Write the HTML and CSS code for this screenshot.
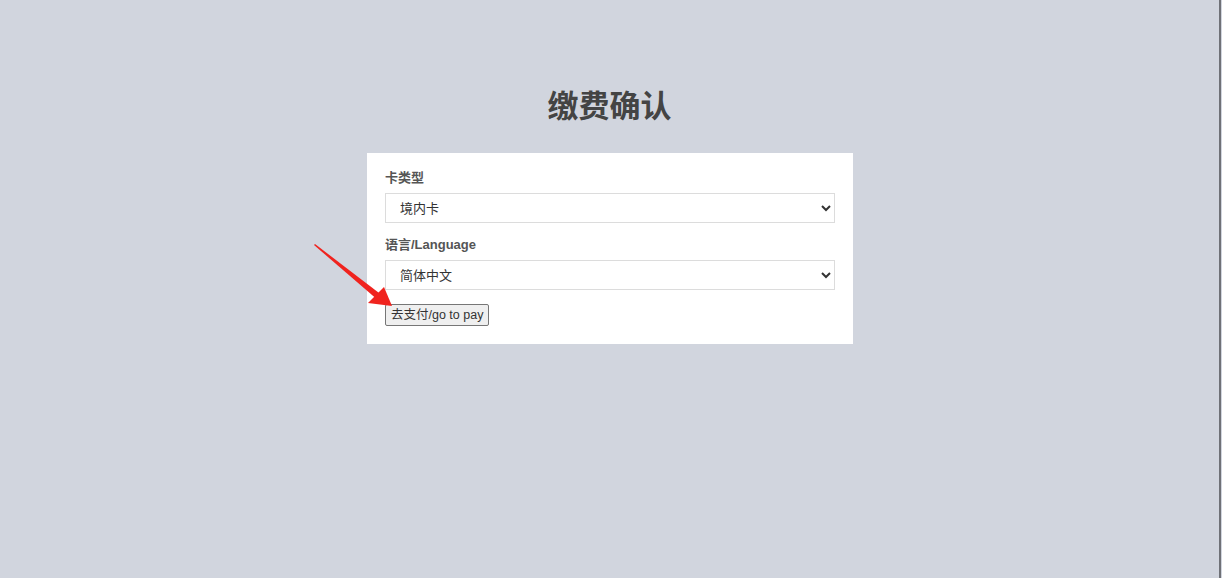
FILE: index.html
```html
<!DOCTYPE html>
<html lang="zh-CN">
<head>
    <meta charset="UTF-8">
    <meta name="viewport" content="width=device-width, initial-scale=1.0">
    <title>缴费确认</title>
    <link rel="stylesheet" href="styles.css">
</head>
<body>
    <div class="page">
        <h1>缴费确认</h1>

        <div class="card">
            <div class="form-group">
                <label for="cardType">卡类型</label>
                <select id="cardType">
                    <option>境内卡</option>
                    <option>境外卡</option>
                </select>
            </div>

            <div class="form-group">
                <label for="lang">语言/Language</label>
                <select id="lang">
                    <option>简体中文</option>
                    <option>English</option>
                </select>
            </div>

            <button type="button">去支付/go to pay</button>
        </div>

        <!-- 标注箭头 -->
        <svg class="arrow" width="100" height="80" viewBox="0 0 100 80">
            <path d="M1 2 L2 1 L70 53 L66 58 Z" fill="#f0231e"/>
            <path d="M79 63 L55 60 L71 44 Z" fill="#f0231e"/>
        </svg>
    </div>
</body>
</html>
```

FILE: styles.css
```css
* {
    box-sizing: border-box;
    margin: 0;
    padding: 0;
}

html,
body {
    height: 100%;
}

body {
    font-family: "Liberation Sans", Arial, "Noto Sans CJK SC", sans-serif;
    background-color: #d1d5de;
    color: #333;
}

.page {
    position: relative;
    min-height: 100%;
    width: 1221px;
    border-right: 2px solid #6f7177;
    padding-top: 88px;
}

h1 {
    width: 1219px;
    text-align: center;
    font-size: 31px;
    line-height: 38px;
    font-weight: bold;
    color: #444;
    margin-bottom: 27px;
}

.card {
    width: 486px;
    margin-left: 367px;
    background: #fff;
    padding: 16px 18px 18px;
}

.form-group {
    margin-bottom: 13px;
}

.form-group + .form-group {
    margin-bottom: 14px;
}

label {
    display: block;
    font-size: 13px;
    line-height: 18px;
    font-weight: bold;
    color: #555;
    margin-bottom: 6px;
}

select {
    display: block;
    width: 450px;
    height: 30px;
    padding: 0 10px;
    font-family: "Liberation Sans", Arial, "Noto Sans CJK SC", sans-serif;
    font-size: 13px;
    color: #333;
    background: #fff;
    border: 1px solid #dcdcdc;
    border-radius: 0;
}

button {
    display: block;
    height: 22px;
    padding: 0 5px;
    font-family: "Liberation Sans", Arial, "Noto Sans CJK SC", sans-serif;
    font-size: 12.5px;
    line-height: 18px;
    color: #333;
    background: #efefef;
    border: 1px solid #767676;
    border-radius: 2px;
}

.arrow {
    position: absolute;
    left: 313px;
    top: 243px;
}
```
